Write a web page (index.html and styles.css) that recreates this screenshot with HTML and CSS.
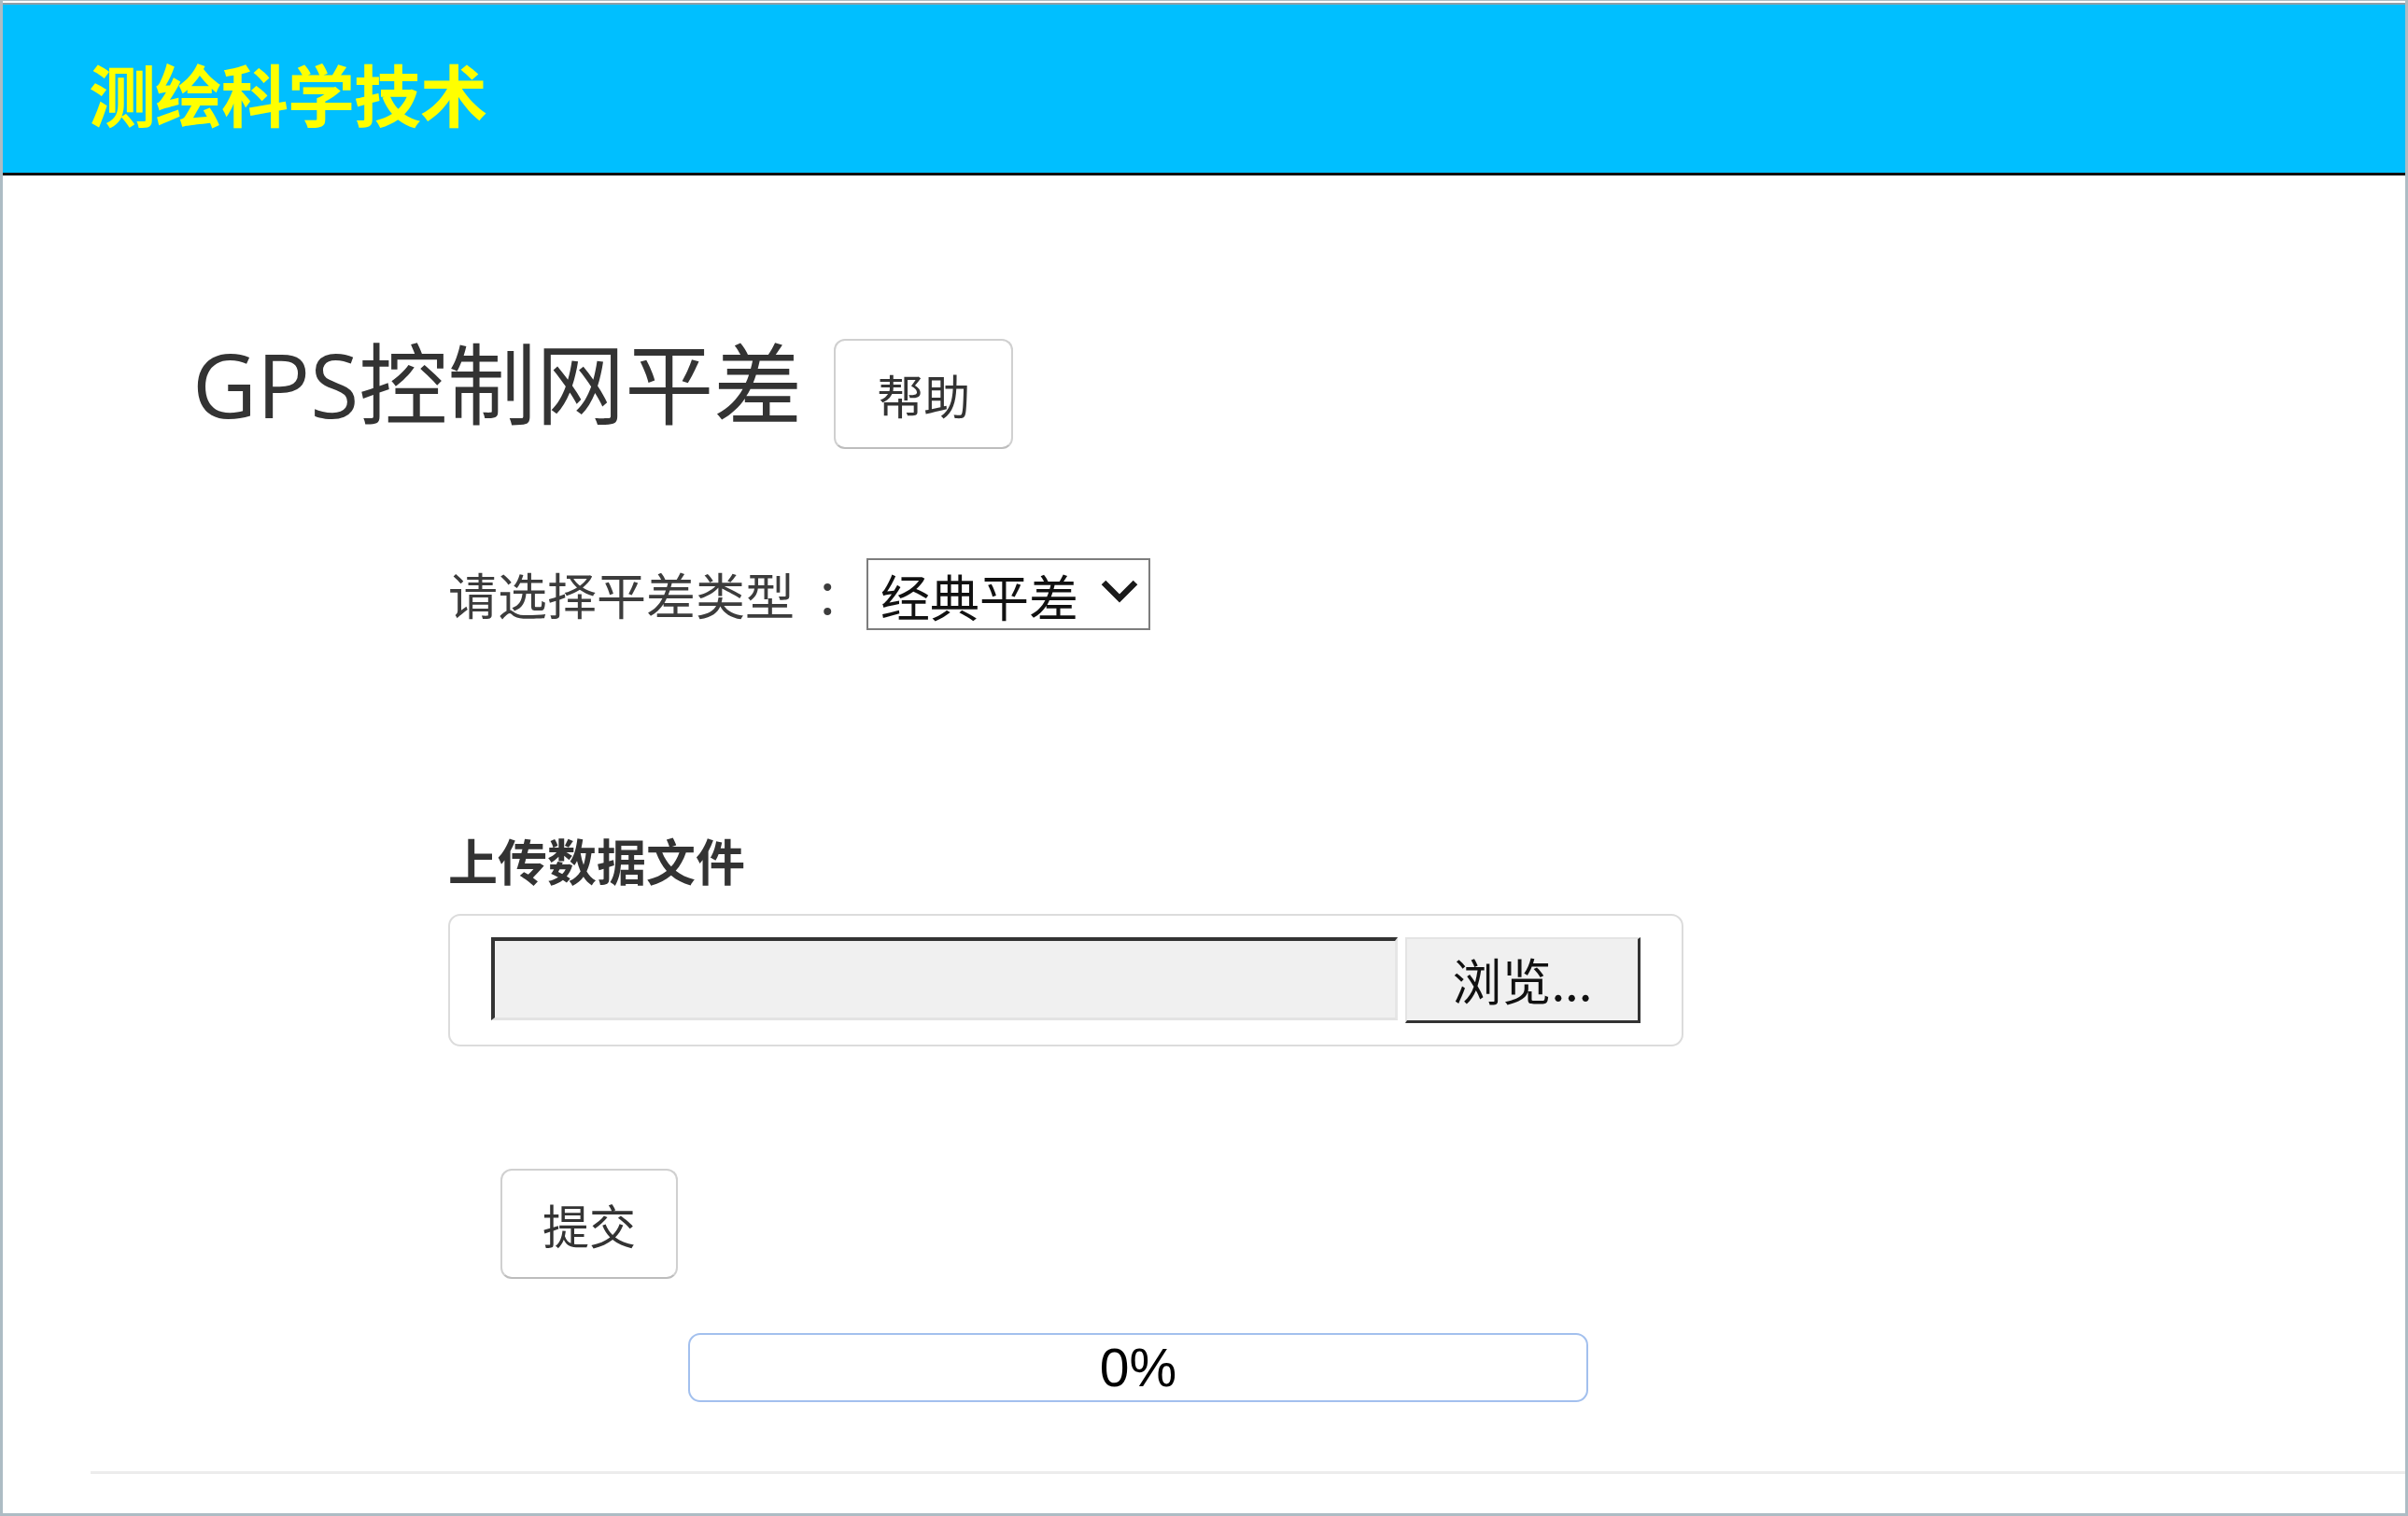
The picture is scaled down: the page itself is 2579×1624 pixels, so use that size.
FILE: index.html
```html
<!DOCTYPE html>
<html lang="zh-CN">

<head>
    <meta charset="UTF-8">
    <meta name="viewport" content="width=device-width, initial-scale=1.0">
    <title>GPS控制网平差</title>
    <link rel="stylesheet" href="styles.css">
</head>

<body>
    <div class="page">
        <header class="topbar">
            <h1>测绘科学技术</h1>
        </header>
        <main class="content">
            <div class="titleRow">
                <h2>GPS控制网平差</h2>
                <button class="btn">帮助</button>
            </div>
            <form class="adjustForm">
                <div class="typeRow">
                    <label for="adjType">请选择平差类型<span class="colon">：</span></label>
                    <span class="selectWrap">
                        <select id="adjType" class="typeSelect">
                            <option>经典平差</option>
                            <option>秩亏平差</option>
                        </select>
                        <svg class="chevron" viewBox="0 0 42 26" width="42" height="26">
                            <polyline points="4,4 21,21 38,4" fill="none" stroke="#1a1a1a" stroke-width="6.5" />
                        </svg>
                    </span>
                </div>
                <h3>上传数据文件</h3>
                <div class="fileBox">
                    <input type="text" class="filePath" readonly>
                    <button type="button" class="browse">浏览...</button>
                </div>
                <div class="submitRow">
                    <button type="button" class="btn">提交</button>
                </div>
                <div class="progress">0%</div>
            </form>
            <hr>
        </main>
    </div>
</body>

</html>
```

FILE: styles.css
```css
html, body {
    margin: 0;
    padding: 0;
    background: #ffffff;
}
.page {
    height: 1624px;
    box-sizing: border-box;
    border: 3px solid #adbcc4;
    border-top-width: 1px;
    font-family: "Noto Sans CJK SC", sans-serif;
    color: #333;
}
.topbar {
    margin-top: 2px;
    height: 185px;
    box-sizing: border-box;
    background: #00bfff;
    border-top: 2px solid #8f9ea6;
    border-bottom: 3px solid #111;
    padding: 58px 0 0 92px;
}
.topbar h1 {
    margin: 0;
    font-size: 72px;
    line-height: 72px;
    font-weight: 700;
    color: #ffff00;
    letter-spacing: -1px;
}
.content {
    padding-left: 94px;
}
.titleRow {
    display: flex;
    align-items: flex-start;
    gap: 34px;
    margin-top: 175px;
    padding-left: 109px;
}
.titleRow h2 {
    margin: 1px 0 0 0;
    font-family: "Open Sans", "Noto Sans CJK SC", sans-serif;
    font-size: 95px;
    line-height: 95px;
    font-weight: 400;
    color: #333;
}
.btn {
    height: 118px;
    padding: 0 44px;
    box-sizing: border-box;
    background: #fff;
    border: 2px solid #d0d0d0;
    border-bottom-color: #bdbdbd;
    border-radius: 12px;
    font-family: "Noto Sans CJK SC", sans-serif;
    font-size: 50px;
    line-height: 1;
    color: #333;
}
.adjustForm {
    padding-left: 383px;
}
.typeRow {
    display: flex;
    align-items: center;
    gap: 2px;
    margin-top: 117px;
}
.typeRow label {
    font-size: 53px;
    line-height: 1;
    color: #3c3c3c;
}
.colon {
    padding-left: 22px;
}
.selectWrap {
    position: relative;
    display: block;
}
.typeSelect {
    appearance: none;
    -webkit-appearance: none;
    display: block;
    width: 304px;
    height: 77px;
    box-sizing: border-box;
    border: 2px solid #7d7d7d;
    border-radius: 0;
    background: #fff;
    padding: 0 0 0 13px;
    font-family: "Noto Sans CJK SC", sans-serif;
    font-size: 53px;
    color: #111;
}
.chevron {
    position: absolute;
    right: 12px;
    top: 22px;
}
.adjustForm h3 {
    margin: 220px 0 0 0;
    font-size: 53px;
    line-height: 53px;
    font-weight: 700;
    color: #333;
}
.fileBox {
    display: flex;
    gap: 8px;
    width: 1323px;
    height: 142px;
    box-sizing: border-box;
    margin-top: 31px;
    padding: 23px 44px 0 44px;
    border: 2px solid #dcdcdc;
    border-radius: 13px;
}
.filePath {
    width: 971px;
    height: 89px;
    box-sizing: border-box;
    margin: 0;
    background: #f0f0f0;
    border-style: solid;
    border-width: 4px 3px 3px 4px;
    border-color: #333 #e6e6e6 #e3e3e3 #333;
    outline: none;
}
.browse {
    width: 252px;
    height: 92px;
    box-sizing: border-box;
    background: #f0f0f0;
    border-style: solid;
    border-width: 2px 3px 3px 2px;
    border-color: #e4e4e4 #333 #333 #e4e4e4;
    font-family: "Noto Sans CJK SC", sans-serif;
    font-size: 53px;
    line-height: 1;
    color: #111;
    padding: 0;
}
.submitRow {
    margin-top: 131px;
    padding-left: 56px;
}
.submitRow .btn {
    padding: 0 43px;
}
.progress {
    width: 964px;
    height: 74px;
    box-sizing: border-box;
    margin: 58px 0 0 257px;
    border: 2px solid #a3c0ee;
    border-radius: 13px;
    display: flex;
    align-items: center;
    justify-content: center;
    font-family: "Liberation Sans", Arial, sans-serif;
    font-size: 57px;
    color: #000;
}
.content hr {
    margin: 74px 0 0 0;
    border: 0;
    border-top: 3px solid #ececec;
}
```
